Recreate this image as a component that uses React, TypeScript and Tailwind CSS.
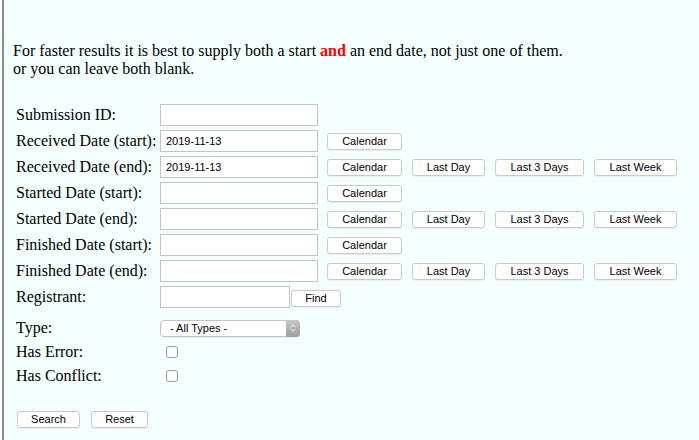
import { ChevronsUpDown } from 'lucide-react';

const serif = { fontFamily: '"Liberation Serif", "Times New Roman", serif' };

const Btn = ({ label, w, className = '' }: { label: string; w: string; className?: string }) => (
  <button
    type="button"
    className={`h-[17px] ${w} ${className} shrink-0 rounded-[3px] border border-[#c9c9c9] bg-white text-[11px] leading-none text-black shadow-[0_1px_0_rgba(0,0,0,0.06)] font-['Liberation_Sans',Arial,sans-serif]`}
  >
    {label}
  </button>
);

const TextBox = ({ value = '', w = 'w-[158px]' }: { value?: string; w?: string }) => (
  <input
    type="text"
    defaultValue={value}
    className={`h-[22px] ${w} shrink-0 border border-[#c4c4c4] bg-white pl-[5px] text-[11px] text-black outline-none font-['Liberation_Sans',Arial,sans-serif]`}
  />
);

interface DateRow {
  label: string;
  value?: string;
  quick: boolean;
}

const dateRows: DateRow[] = [
  { label: 'Received Date (start):', value: '2019-11-13', quick: false },
  { label: 'Received Date (end):', value: '2019-11-13', quick: true },
  { label: 'Started Date (start):', quick: false },
  { label: 'Started Date (end):', quick: true },
  { label: 'Finished Date (start):', quick: false },
  { label: 'Finished Date (end):', quick: true },
];

const Label = ({ children }: { children: React.ReactNode }) => (
  <div className="w-[144px] shrink-0 text-[16px] leading-[18px] text-black" style={serif}>
    {children}
  </div>
);

export default function App() {
  return (
    <div className="min-h-[440px] w-full bg-[#f5ffff]">
      <div className="ml-[2px] min-h-[440px] border-l-2 border-[#8f8f8f] pt-[42px]">
        <p className="pl-[9px] text-[16px] leading-[18px] text-black" style={serif}>
          For faster results it is best to supply both a start{' '}
          <span className="font-bold text-[#ff0000]">and</span> an end date, not just one of them.
          <br />
          or you can leave both blank.
        </p>

        <div className="mt-[24px] pl-[12px]">
          <div className="flex h-[26px] items-center">
            <Label>Submission ID:</Label>
            <TextBox />
          </div>

          {dateRows.map((row) => (
            <div key={row.label} className="flex h-[26px] items-center">
              <Label>{row.label}</Label>
              <TextBox value={row.value} />
              <Btn label="Calendar" w="w-[75px]" className="ml-[9px]" />
              {row.quick && (
                <>
                  <Btn label="Last Day" w="w-[73px]" className="ml-[10px]" />
                  <Btn label="Last 3 Days" w="w-[89px]" className="ml-[10px]" />
                  <Btn label="Last Week" w="w-[83px]" className="ml-[10px]" />
                </>
              )}
            </div>
          ))}

          <div className="flex h-[26px] items-center">
            <Label>Registrant:</Label>
            <TextBox w="w-[130px]" />
            <Btn label="Find" w="w-[50px]" className="ml-[1px] mt-[3px]" />
          </div>

          <div className="mt-[6px] flex h-[24px] items-center">
            <Label>Type:</Label>
            <div className="relative h-[17px] w-[140px]">
              <select className="block h-[17px] w-[140px] appearance-none rounded-[4px] border border-[#c4c4c4] bg-white py-0 pl-[9px] text-[11px] leading-[15px] text-black shadow-[0_1px_0_rgba(0,0,0,0.06)] outline-none font-['Liberation_Sans',Arial,sans-serif]">
                <option>- All Types -</option>
              </select>
              <div className="pointer-events-none absolute right-0 top-0 flex h-[17px] w-[14px] items-center justify-center rounded-r-[4px] bg-gradient-to-b from-[#c6c6c6] to-[#9d9d9d]">
                <ChevronsUpDown size={10} strokeWidth={2} className="text-white" />
              </div>
            </div>
          </div>

          <div className="flex h-[24px] items-center">
            <Label>Has Error:</Label>
            <input
              type="checkbox"
              className="ml-[6px] h-[12px] w-[12px] appearance-none rounded-[3px] border border-[#9a9a9a] bg-white"
            />
          </div>

          <div className="flex h-[24px] items-center">
            <Label>Has Conflict:</Label>
            <input
              type="checkbox"
              className="ml-[6px] h-[12px] w-[12px] appearance-none rounded-[3px] border border-[#9a9a9a] bg-white"
            />
          </div>

          <div className="mt-[23px] flex items-center pl-[1px]">
            <Btn label="Search" w="w-[63px]" />
            <Btn label="Reset" w="w-[57px]" className="ml-[11px]" />
          </div>
        </div>
      </div>
    </div>
  );
}
